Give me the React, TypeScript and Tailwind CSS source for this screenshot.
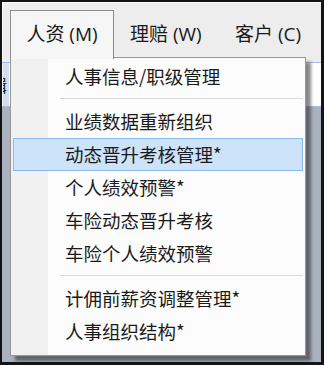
import React from "react";

const items: (string | null)[] = [
  "人事信息/职级管理",
  null,
  "业绩数据重新组织",
  "动态晋升考核管理*",
  "个人绩效预警*",
  "车险动态晋升考核",
  "车险个人绩效预警",
  null,
  "计佣前薪资调整管理*",
  "人事组织结构*",
];

export default function App() {
  return (
    <div
      className="w-[324px] h-[365px] bg-[#141414] pl-[2px] pt-[2px] pr-[3px] pb-[3px]"
      style={{ fontFamily: '"Noto Sans CJK SC", "Noto Sans", sans-serif' }}
    >
      <div className="relative w-full h-full flex flex-col bg-[#a9b2be] overflow-hidden">
        {/* menu bar */}
        <div
          className="h-[60px] shrink-0 bg-[#ededed] border-t border-l border-[#fafafa] flex items-start pl-[7px] pt-[7px] text-[19px] text-[#1a1a1a]"
          style={{ fontFamily: '"Open Sans", "Noto Sans CJK SC", sans-serif' }}
        >
          <div className="relative z-20 w-[104px] h-[49px] border border-b-0 border-[#8e8e8e] bg-[#f6f6f6] flex items-start justify-center pt-[9px]">
            人资 (M)
          </div>
          <div className="pl-[16px] pt-[10px] w-[121px]">理赔 (W)</div>
          <div className="pt-[10px]">客户 (C)</div>
        </div>
        {/* toolbar strip */}
        <div className="h-[45px] shrink-0 border-t border-b border-[#a3bcdc] bg-white flex">
          <div className="w-[7px] h-full bg-[#cfdef0] border-l border-[#eef3fa] overflow-hidden">
            <div className="ml-[-13px] mt-[13px] text-[17px] leading-none text-[#1a2a40]">辑</div>
          </div>
        </div>
        <div className="flex-1" />

        {/* dropdown menu */}
        <div className="absolute z-10 left-[8px] top-[55px] w-[296px] h-[299px] border border-[#979797] shadow-[5px_5px_3px_rgba(40,40,40,0.55)] bg-[linear-gradient(to_right,#f1f1f1_37px,#fcfcfc_37px)] pt-[2px] text-[18.5px] text-[#1a1a1a]">
          {items.map((it, i) =>
            it === null ? (
              <div key={i} className="h-[12px] flex items-center pl-[49px] pr-[2px]">
                <div className="h-[2px] w-full border-t border-[#d7d7d7] border-b border-b-white" />
              </div>
            ) : (
              <div
                key={i}
                className={
                  "h-[33px] mx-[2px] pl-[51px] flex items-center leading-none border " +
                  (it === "动态晋升考核管理*"
                    ? "bg-[#cce3fa] border-[#8cbcef]"
                    : "border-transparent")
                }
              >
                {it}
              </div>
            )
          )}
        </div>
      </div>
    </div>
  );
}
